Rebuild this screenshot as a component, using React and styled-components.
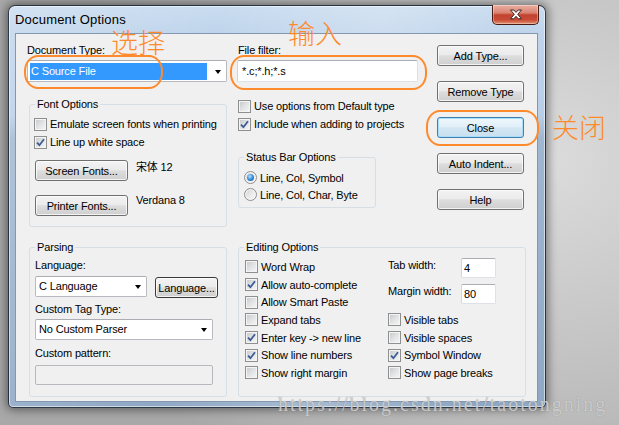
import React from "react";
import styled, { createGlobalStyle, css } from "styled-components";

const GlobalStyle = createGlobalStyle`
  html, body {
    margin: 0;
    padding: 0;
  }
  body {
    width: 619px;
    height: 425px;
    overflow: hidden;
    background: radial-gradient(ellipse 75% 95% at 88% 38%, #dcdcdc 0%, #c5c5c5 45%, #a8a8a8 100%);
    font-family: "Liberation Sans", Arial, "Noto Sans CJK SC", sans-serif;
  }
`;

const Page = styled.div`
  position: relative;
  width: 619px;
  height: 425px;
  padding: 5px 0 0 8px;
  box-sizing: border-box;
`;

const Window = styled.div`
  width: 538px;
  height: 403px;
  box-sizing: border-box;
  border: 1px solid rgba(18, 28, 40, 0.85);
  border-radius: 7px 7px 5px 5px;
  background: linear-gradient(100deg, rgba(255, 255, 255, 0.18) 0%, rgba(255, 255, 255, 0) 35%, rgba(255, 255, 255, 0.22) 62%, rgba(255, 255, 255, 0) 85%),
    linear-gradient(180deg, #c9dcf0 0px, #bfd4eb 28px, #b8cee7 110px, #a0b7d1 132px, #8fa8c5 100%);
  box-shadow: 0 0 10px 2px rgba(0, 0, 0, 0.45), inset 0 0 0 1px rgba(255, 255, 255, 0.55);
  display: flex;
  flex-direction: column;
  padding: 0 7px 5px 6px;
`;

const TitleBar = styled.div`
  height: 27px;
  flex-shrink: 0;
  display: flex;
  justify-content: space-between;
  align-items: flex-start;
`;

const TitleText = styled.div`
  font-family: "Liberation Sans", Arial, sans-serif;
  font-size: 13px;
  line-height: 27px;
  letter-spacing: 0.2px;
  color: #000;
`;

const CloseBox = styled.div`
  width: 47px;
  height: 20px;
  margin: -1px -1px 0 0;
  box-sizing: border-box;
  border: 1px solid #4a1b12;
  border-top: none;
  border-radius: 0 0 5px 5px;
  background: linear-gradient(180deg, #eab0a2 0%, #d98272 42%, #c2432f 52%, #c94b36 78%, #e3916f 100%);
  box-shadow: inset 0 0 0 1px rgba(255, 255, 255, 0.35);
  display: flex;
  align-items: center;
  justify-content: center;
`;

const Client = styled.div`
  flex: 1;
  background: #f0f0f0;
  border: 1px solid #8497b0;
  padding: 10px 0 0 11px;
  display: flex;
  flex-direction: column;
  font-size: 11px;
  letter-spacing: -0.15px;
  color: #000;
`;

const Row = styled.div`
  display: flex;
  align-items: flex-start;
  margin-top: ${(p) => p.$mt || 0}px;
  margin-left: ${(p) => p.$ml || 0}px;
`;

const Column = styled.div`
  display: flex;
  flex-direction: column;
  width: ${(p) => p.$w}px;
  margin-left: ${(p) => p.$ml || 0}px;
  margin-top: ${(p) => p.$mt || 0}px;
  gap: ${(p) => p.$gap || 0}px;
`;

const FieldLabel = styled.div`
  line-height: 13px;
  height: 13px;
  white-space: nowrap;
  margin-top: ${(p) => p.$mt || 0}px;
  margin-left: ${(p) => p.$ml || 0}px;
  width: ${(p) => (p.$w ? `${p.$w}px` : "auto")};
  flex-shrink: 0;
`;

const Combo = styled.div`
  width: ${(p) => p.$w}px;
  height: ${(p) => p.$h || 21}px;
  margin-top: ${(p) => p.$mt || 0}px;
  box-sizing: border-box;
  border: 1px solid #b7bac0;
  border-top-color: #abadb3;
  border-radius: 2px;
  background: #fff;
  display: flex;
  align-items: center;
  padding-left: 2px;
  flex-shrink: 0;
`;

const ComboValue = styled.div`
  flex: 1;
  height: 17px;
  line-height: 17px;
  padding-left: 1px;
  white-space: nowrap;
  ${(p) =>
    p.$selected &&
    css`
      background: #3399ff;
      color: #fff;
      margin-right: 3px;
    `}
`;

const ArrowZone = styled.div`
  width: 16px;
  height: 100%;
  display: flex;
  align-items: center;
  justify-content: center;
`;

const Arrow = styled.div`
  width: 0;
  height: 0;
  border-left: 3.5px solid transparent;
  border-right: 3.5px solid transparent;
  border-top: 4px solid #000;
  margin-top: 1px;
`;

const TextBox = styled.div`
  width: ${(p) => p.$w}px;
  height: ${(p) => p.$h || 20}px;
  margin-top: ${(p) => p.$mt || 0}px;
  box-sizing: border-box;
  border: 1px solid #dfe1e6;
  border-top-color: #abadb3;
  border-left-color: #d2d5db;
  border-radius: 2px;
  background: ${(p) => (p.$disabled ? "#f0f0f0" : "#fff")};
  display: flex;
  align-items: center;
  padding-left: ${(p) => (p.$pl === undefined ? 4 : p.$pl)}px;
  white-space: nowrap;
  flex-shrink: 0;
  ${(p) =>
    p.$disabled &&
    css`
      border-color: #b5b8bd;
    `}
`;

const Button = styled.button`
  width: ${(p) => p.$w || 87}px;
  height: 21px;
  margin: ${(p) => p.$mt || 0}px 0 0 ${(p) => p.$ml || 0}px;
  padding: 0;
  box-sizing: border-box;
  border: 1px solid #707070;
  border-radius: 3px;
  background: linear-gradient(180deg, #f3f3f3 0%, #ebebeb 45%, #dddddd 52%, #cfcfcf 100%);
  box-shadow: inset 0 0 0 1px rgba(255, 255, 255, 0.75);
  font-family: "Liberation Sans", Arial, sans-serif;
  font-size: 11px;
  letter-spacing: -0.15px;
  color: #000;
  flex-shrink: 0;
  ${(p) =>
    p.$default &&
    css`
      border-color: #3c7fb1;
      background: linear-gradient(180deg, #eef7fc 0%, #e2eff8 45%, #d3e6f3 52%, #c9e0f0 100%);
      box-shadow: inset 0 0 0 1px #a8def7;
    `}
  ${(p) =>
    p.$focus &&
    css`
      border-color: #3a3a3a;
    `}
`;

const Group = styled.fieldset`
  margin: ${(p) => p.$mt || 0}px 0 0 ${(p) => p.$ml || 0}px;
  width: ${(p) => p.$w}px;
  box-sizing: border-box;
  border: 1px solid #d5dfe5;
  border-radius: 3px;
  padding: 0;
  min-width: 0;
  flex-shrink: 0;
`;

const Legend = styled.legend`
  font-size: 11px;
  line-height: 13px;
  padding: 0 2px;
  margin-left: 5px;
`;

const GroupBody = styled.div`
  padding: ${(p) => p.$pad};
  display: flex;
  flex-direction: ${(p) => p.$dir || "column"};
`;

const CheckRow = styled.div`
  display: flex;
  align-items: center;
  gap: 3px;
  height: ${(p) => p.$h || 18}px;
  margin-left: ${(p) => p.$ml || 0}px;
  white-space: nowrap;
`;

const CheckBox = styled.span`
  width: 13px;
  height: 13px;
  box-sizing: border-box;
  border: 1px solid #8e8f8f;
  background: linear-gradient(135deg, #c4c7cb 0%, #e4e5e6 55%, #f6f6f6 100%);
  box-shadow: inset 0 0 0 1px #f4f4f4;
  display: inline-flex;
  align-items: center;
  justify-content: center;
  flex-shrink: 0;
`;

const RadioCircle = styled.span`
  width: 13px;
  height: 13px;
  box-sizing: border-box;
  border-radius: 50%;
  border: 1px solid #8e8f8f;
  background: linear-gradient(135deg, #cfd1d4 0%, #eeeeef 60%, #fafafa 100%);
  box-shadow: inset 0 0 0 1px #f6f6f6;
  display: inline-flex;
  align-items: center;
  justify-content: center;
  flex-shrink: 0;
`;

const RadioDot = styled.span`
  width: 7px;
  height: 7px;
  border-radius: 50%;
  background: radial-gradient(circle at 40% 35%, #b4e2ff 0%, #2f86d6 55%, #11508f 100%);
`;

const FontName = styled.div`
  line-height: 13px;
  margin-left: 8px;
  margin-top: ${(p) => p.$mt || 0}px;
  font-family: "Liberation Sans", Arial, "Noto Sans CJK SC", sans-serif;
  white-space: nowrap;
`;

const Ring = styled.div`
  position: absolute;
  left: ${(p) => p.$x}px;
  top: ${(p) => p.$y}px;
  width: ${(p) => p.$w}px;
  height: ${(p) => p.$h}px;
  box-sizing: border-box;
  border: 2.5px solid #ff8a2b;
  border-radius: 14px / 16px;
  pointer-events: none;
`;

const Note = styled.div`
  position: absolute;
  left: ${(p) => p.$x}px;
  top: ${(p) => p.$y}px;
  font-family: "Noto Sans CJK SC", sans-serif;
  font-size: 27px;
  font-weight: 300;
  line-height: 1;
  color: #ff8a2b;
  white-space: nowrap;
`;

const Watermark = styled.div`
  position: absolute;
  left: 278px;
  top: 392px;
  font-family: "Liberation Serif", "Times New Roman", serif;
  font-size: 20px;
  line-height: 24px;
  letter-spacing: 2px;
  color: rgba(214, 214, 214, 0.85);
  text-shadow: 0 0 1px rgba(110, 110, 110, 0.6);
  white-space: nowrap;
  pointer-events: none;
`;

const Check = ({ checked }) => (
  <CheckBox>
    {checked && (
      <svg width="9" height="9" viewBox="0 0 9 9">
        <path d="M1 4.6 L3.4 7.2 L8 1.2" fill="none" stroke="#3b5a96" strokeWidth="1.8" />
      </svg>
    )}
  </CheckBox>
);

const CheckItem = ({ checked, children, h, ml }) => (
  <CheckRow $h={h} $ml={ml}>
    <Check checked={checked} />
    <span>{children}</span>
  </CheckRow>
);

const RadioItem = ({ selected, children }) => (
  <CheckRow $h={17}>
    <RadioCircle>{selected && <RadioDot />}</RadioCircle>
    <span>{children}</span>
  </CheckRow>
);

const CloseGlyph = () => (
  <svg width="14" height="11" viewBox="0 0 14 11">
    <path
      d="M1.5 1 L4.8 1 L7 3.4 L9.2 1 L12.5 1 L8.7 5.3 L12.5 9.8 L9.2 9.8 L7 7.3 L4.8 9.8 L1.5 9.8 L5.3 5.3 Z"
      fill="#fff"
      stroke="#3b2626"
      strokeWidth="1"
      strokeLinejoin="round"
    />
  </svg>
);

const leftEditing = [
  ["Word Wrap", false],
  ["Allow auto-complete", true],
  ["Allow Smart Paste", false],
  ["Expand tabs", false],
  ["Enter key -> new line", true],
  ["Show line numbers", true],
  ["Show right margin", false],
];

const rightEditing = [
  ["Visible tabs", false],
  ["Visible spaces", false],
  ["Symbol Window", true],
  ["Show page breaks", false],
];

const sideButtons = ["Add Type...", "Remove Type", "Close", "Auto Indent...", "Help"];

const App = () => {
  return (
    <Page>
      <GlobalStyle />
      <Window>
        <TitleBar>
          <TitleText>Document Options</TitleText>
          <CloseBox>
            <CloseGlyph />
          </CloseBox>
        </TitleBar>
        <Client>
          <Row>
            <Column $w={204}>
              <FieldLabel>Document Type:</FieldLabel>
              <Combo $w={200} $h={22} $mt={3}>
                <ComboValue $selected>C Source File</ComboValue>
                <ArrowZone>
                  <Arrow />
                </ArrowZone>
              </Combo>
              <Group $w={198} $ml={2} $mt={16}>
                <Legend>Font Options</Legend>
                <GroupBody $pad="4px 0 10px 4px">
                  <CheckItem>Emulate screen fonts when printing</CheckItem>
                  <CheckItem checked>Line up white space</CheckItem>
                  <Row $mt={9} $ml={1}>
                    <Button $w={93}>Screen Fonts...</Button>
                    <FontName $mt={1}>宋体 12</FontName>
                  </Row>
                  <Row $mt={14} $ml={1}>
                    <Button $w={93}>Printer Fonts...</Button>
                    <FontName $mt={-1}>Verdana 8</FontName>
                  </Row>
                </GroupBody>
              </Group>
            </Column>

            <Column $w={181} $ml={6}>
              <FieldLabel $ml={1}>File filter:</FieldLabel>
              <TextBox $w={181} $h={22} $mt={3}>
                *.c;*.h;*.s
              </TextBox>
              <Column $w={181} $mt={15}>
                <CheckItem ml={1}>Use options from Default type</CheckItem>
                <CheckItem ml={1} checked>
                  Include when adding to projects
                </CheckItem>
              </Column>
              <Group $w={138} $ml={1} $mt={18}>
                <Legend>Status Bar Options</Legend>
                <GroupBody $pad="5px 0 4px 5px">
                  <RadioItem selected>Line, Col, Symbol</RadioItem>
                  <RadioItem>Line, Col, Char, Byte</RadioItem>
                </GroupBody>
              </Group>
            </Column>

            <Column $w={87} $ml={19} $mt={1} $gap={15}>
              {sideButtons.map((label) => (
                <Button key={label} $default={label === "Close"}>
                  {label}
                </Button>
              ))}
            </Column>
          </Row>

          <Row $mt={14} $ml={2}>
            <Group $w={198}>
              <Legend>Parsing</Legend>
              <GroupBody $pad="5px 0 11px 5px">
                <FieldLabel>Language:</FieldLabel>
                <Row $mt={4}>
                  <Combo $w={112}>
                    <ComboValue>C Language</ComboValue>
                    <ArrowZone>
                      <Arrow />
                    </ArrowZone>
                  </Combo>
                  <Button $w={63} $ml={8} $mt={1} $focus>
                    Language...
                  </Button>
                </Row>
                <FieldLabel $mt={5}>Custom Tag Type:</FieldLabel>
                <Combo $w={178} $mt={3}>
                  <ComboValue>No Custom Parser</ComboValue>
                  <ArrowZone>
                    <Arrow />
                  </ArrowZone>
                </Combo>
                <FieldLabel $mt={7}>Custom pattern:</FieldLabel>
                <TextBox $w={178} $mt={5} $disabled />
              </GroupBody>
            </Group>

            <Group $w={288} $ml={11}>
              <Legend>Editing Options</Legend>
              <GroupBody $pad="4px 0 14px 6px" $dir="row">
                <Column $w={143}>
                  {leftEditing.map(([label, on]) => (
                    <CheckItem key={label} checked={on} h={17.7}>
                      {label}
                    </CheckItem>
                  ))}
                </Column>
                <Column $w={130}>
                  <Row>
                    <FieldLabel $w={73} $mt={1}>
                      Tab width:
                    </FieldLabel>
                    <TextBox $w={35} $pl={2}>
                      4
                    </TextBox>
                  </Row>
                  <Row $mt={6}>
                    <FieldLabel $w={73} $mt={1}>
                      Margin width:
                    </FieldLabel>
                    <TextBox $w={35} $pl={2}>
                      80
                    </TextBox>
                  </Row>
                  <Column $w={130} $mt={7}>
                    {rightEditing.map(([label, on]) => (
                      <CheckItem key={label} checked={on} h={17.7}>
                        {label}
                      </CheckItem>
                    ))}
                  </Column>
                </Column>
              </GroupBody>
            </Group>
          </Row>
        </Client>
      </Window>

      <Ring $x={24} $y={55} $w={139} $h={34} />
      <Ring $x={230} $y={55} $w={197} $h={35} />
      <Ring $x={426} $y={110} $w={113} $h={36} />
      <Note $x={111} $y={28}>选择</Note>
      <Note $x={288} $y={19}>输入</Note>
      <Note $x={552} $y={113}>关闭</Note>
      <Watermark>https://blog.csdn.net/taotongning</Watermark>
    </Page>
  );
};

export default App;
